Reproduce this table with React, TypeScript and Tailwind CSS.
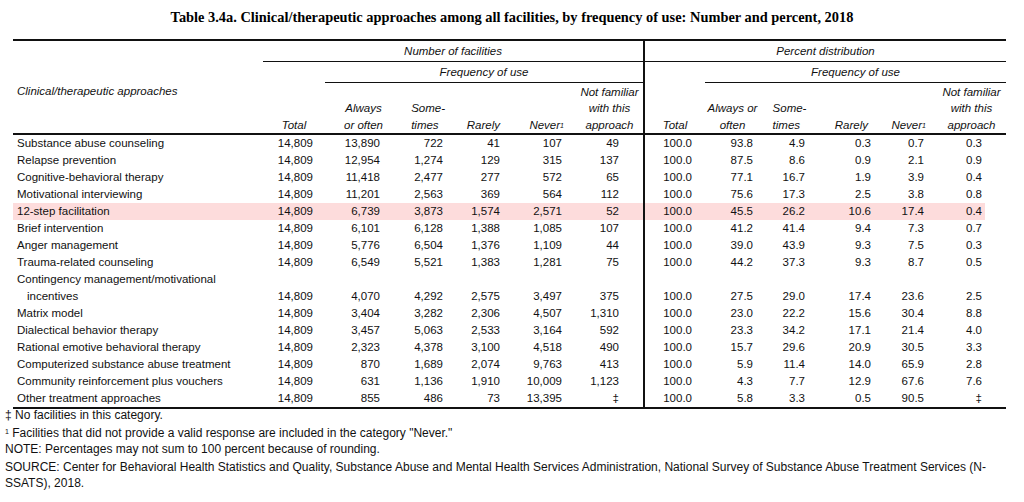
import React from "react";

type Row = { label: React.ReactNode; n: string[]; p: string[]; hl?: boolean; two?: boolean };

const rows: Row[] = [
  { label: "Substance abuse counseling", n: ["14,809", "13,890", "722", "41", "107", "49"], p: ["100.0", "93.8", "4.9", "0.3", "0.7", "0.3"] },
  { label: "Relapse prevention", n: ["14,809", "12,954", "1,274", "129", "315", "137"], p: ["100.0", "87.5", "8.6", "0.9", "2.1", "0.9"] },
  { label: "Cognitive-behavioral therapy", n: ["14,809", "11,418", "2,477", "277", "572", "65"], p: ["100.0", "77.1", "16.7", "1.9", "3.9", "0.4"] },
  { label: "Motivational interviewing", n: ["14,809", "11,201", "2,563", "369", "564", "112"], p: ["100.0", "75.6", "17.3", "2.5", "3.8", "0.8"] },
  { label: "12-step facilitation", n: ["14,809", "6,739", "3,873", "1,574", "2,571", "52"], p: ["100.0", "45.5", "26.2", "10.6", "17.4", "0.4"], hl: true },
  { label: "Brief intervention", n: ["14,809", "6,101", "6,128", "1,388", "1,085", "107"], p: ["100.0", "41.2", "41.4", "9.4", "7.3", "0.7"] },
  { label: "Anger management", n: ["14,809", "5,776", "6,504", "1,376", "1,109", "44"], p: ["100.0", "39.0", "43.9", "9.3", "7.5", "0.3"] },
  { label: "Trauma-related counseling", n: ["14,809", "6,549", "5,521", "1,383", "1,281", "75"], p: ["100.0", "44.2", "37.3", "9.3", "8.7", "0.5"] },
  {
    label: (
      <div className="flex flex-col">
        <span>Contingency management/motivational</span>
        <span className="pl-[10px]">incentives</span>
      </div>
    ),
    n: ["14,809", "4,070", "4,292", "2,575", "3,497", "375"],
    p: ["100.0", "27.5", "29.0", "17.4", "23.6", "2.5"],
    two: true,
  },
  { label: "Matrix model", n: ["14,809", "3,404", "3,282", "2,306", "4,507", "1,310"], p: ["100.0", "23.0", "22.2", "15.6", "30.4", "8.8"] },
  { label: "Dialectical behavior therapy", n: ["14,809", "3,457", "5,063", "2,533", "3,164", "592"], p: ["100.0", "23.3", "34.2", "17.1", "21.4", "4.0"] },
  { label: "Rational emotive behavioral therapy", n: ["14,809", "2,323", "4,378", "3,100", "4,518", "490"], p: ["100.0", "15.7", "29.6", "20.9", "30.5", "3.3"] },
  { label: "Computerized substance abuse treatment", n: ["14,809", "870", "1,689", "2,074", "9,763", "413"], p: ["100.0", "5.9", "11.4", "14.0", "65.9", "2.8"] },
  { label: "Community reinforcement plus vouchers", n: ["14,809", "631", "1,136", "1,910", "10,009", "1,123"], p: ["100.0", "4.3", "7.7", "12.9", "67.6", "7.6"] },
  { label: "Other treatment approaches", n: ["14,809", "855", "486", "73", "13,395", "‡"], p: ["100.0", "5.8", "3.3", "0.5", "90.5", "‡"] },
];

const grid =
  "grid grid-cols-[250px_62px_60px_62px_68px_61px_67px_62px_55px_55px_65px_57px_69px]";

const nPad = ["pr-[12px]", "pr-[5px]", "pr-[4px]", "pr-[15px]", "pr-[14px]", "pr-[24px]"];
const pPad = ["pr-[13px]", "pr-[7px]", "pr-[10px]", "pr-[9px]", "pr-[13px]", "pr-[24px]"];

function Sup() {
  return <sup className="text-[7px] relative -top-[1px]">1</sup>;
}

function ColHeads({ left }: { left: boolean }) {
  const start = left
    ? ["col-start-3", "col-start-4", "col-start-5", "col-start-6", "col-start-7"]
    : ["col-start-9", "col-start-10", "col-start-11", "col-start-12", "col-start-13"];
  const base = "row-start-3 flex items-end pb-0 leading-[16.5px] italic";
  return (
    <>
      {left ? (
        <div className={`${start[0]} ${base} justify-end pr-[2px] text-center`}>
          <span>
            Always
            <br />
            or often
          </span>
        </div>
      ) : (
        <div className={`${start[0]} ${base} justify-center text-center`}>
          <span>
            Always or
            <br />
            often
          </span>
        </div>
      )}
      <div className={`${start[1]} ${base} ${left ? "justify-end pr-[2px]" : "justify-center pl-[4px]"}`}>
        <span className="text-left">
          Some-
          <br />
          times
        </span>
      </div>
      <div className={`${start[2]} ${base} justify-end ${left ? "pr-[15px]" : "pr-[12px]"}`}>Rarely</div>
      <div className={`${start[3]} ${base} justify-end ${left ? "pr-[12px]" : "pr-[11px]"}`}>
        <span>
          Never
          <Sup />
        </span>
      </div>
      <div className={`${start[4]} ${base} justify-center text-center`}>
        <span>
          Not familiar
          <br />
          with this
          <br />
          approach
        </span>
      </div>
    </>
  );
}

export default function App() {
  return (
    <div className="w-[1024px] h-[502px] bg-white text-[#111] overflow-hidden [font-family:'Liberation_Sans',Arial,sans-serif] text-[11.5px]">
      <div className="pt-[8px] text-center [font-family:'Liberation_Serif','Times_New_Roman',serif] font-bold text-[14.4px] leading-[18px] text-black">
        Table 3.4a. Clinical/therapeutic approaches among all facilities, by frequency of use: Number and percent, 2018
      </div>

      <div className="mt-[13px] ml-[13px] w-[993px]">
        {/* header */}
        <div className={`${grid} grid-rows-[21px_21px_50px] border-t-2 border-b-2 border-[#111]`}>
          <div className="col-start-1 row-start-1 row-span-3 flex items-center pl-[4px] pt-[10px] italic">
            Clinical/therapeutic approaches
          </div>
          <div className="col-start-2 col-span-6 row-start-1 border-b border-[#111] flex items-center justify-center pt-[2px] italic">
            Number of facilities
          </div>
          <div className="col-start-8 col-span-6 row-start-1 border-b border-l-2 border-[#111] flex items-center justify-center pt-[2px] italic">
            Percent distribution
          </div>
          <div className="col-start-2 row-start-2 row-span-2 flex items-end justify-center pb-0 italic leading-[16.5px]">
            Total
          </div>
          <div className="col-start-3 col-span-5 row-start-2 border-b border-[#111] flex items-center justify-center pt-[2px] italic">
            Frequency of use
          </div>
          <div className="col-start-8 row-start-2 row-span-2 border-l-2 border-[#111] flex items-end justify-center pb-0 italic leading-[16.5px]">
            Total
          </div>
          <div className="col-start-9 col-span-5 row-start-2 border-b border-[#111] flex items-center justify-center pt-[2px] italic">
            Frequency of use
          </div>
          <ColHeads left />
          <ColHeads left={false} />
        </div>

        {/* body */}
        <div className="border-b-2 border-[#111]">
          {rows.map((r, i) => (
            <div
              key={i}
              className={`${grid} ${r.two ? "h-[34px] items-end" : "h-[17px] items-center"} leading-[17px] ${
                r.hl ? "bg-[linear-gradient(to_right,#fddcdc_972px,transparent_972px)]" : ""
              }`}
            >
              <div className="pl-[4px] whitespace-nowrap">{r.label}</div>
              {r.n.map((v, j) => (
                <div key={j} className={`text-right ${nPad[j]}`}>
                  {v}
                </div>
              ))}
              {r.p.map((v, j) => (
                <div
                  key={j}
                  className={`text-right ${pPad[j]} ${
                    j === 0 ? `border-l-2 border-[#111] ${r.two ? "h-[34px] flex items-end justify-end" : "h-[17px]"}` : ""
                  }`}
                >
                  {v}
                </div>
              ))}
            </div>
          ))}
        </div>
      </div>

      {/* footer */}
      <div className="pl-[5px] -mt-[2px] text-[#111] text-[12px]">
        <p className="leading-[16px]">‡ No facilities in this category.</p>
        <p className="mt-[2px] leading-[16px]">
          <sup className="text-[7px]">1</sup> Facilities that did not provide a valid response are included in the category "Never."
          <br />
          NOTE: Percentages may not sum to 100 percent because of rounding.
        </p>
        <p className="mt-[3px] leading-[15.5px]">
          SOURCE: Center for Behavioral Health Statistics and Quality, Substance Abuse and Mental Health Services Administration, National Survey of Substance Abuse Treatment Services (N-
          <br />
          SSATS), 2018.
        </p>
      </div>
    </div>
  );
}
